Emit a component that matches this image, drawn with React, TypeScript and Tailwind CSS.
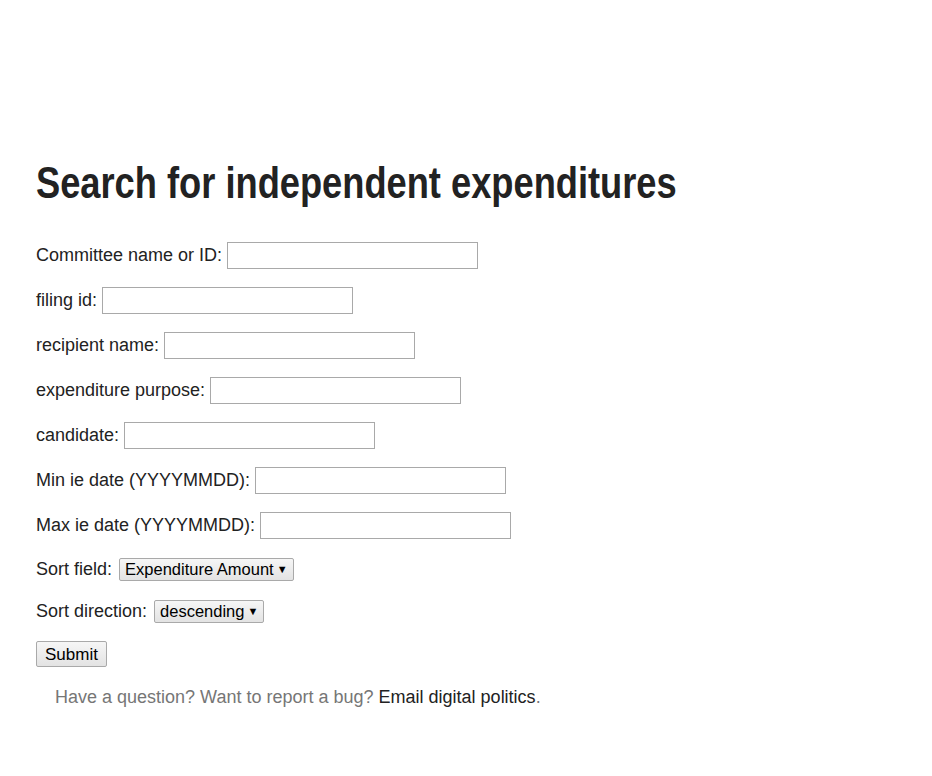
import React from 'react';

const fields = [
  'Committee name or ID:',
  'filing id:',
  'recipient name:',
  'expenditure purpose:',
  'candidate:',
  'Min ie date (YYYYMMDD):',
  'Max ie date (YYYYMMDD):',
];

function SelectBox({ label }: { label: string }) {
  return (
    <span className="inline-flex items-center h-[23px] px-[5px] border border-[#a9a9a9] rounded-[2px] bg-gradient-to-b from-[#f6f6f6] to-[#e3e3e3] text-[16.5px] text-black leading-none">
      {label}
      <span className="ml-[3px] text-[11px]">▼</span>
    </span>
  );
}

export default function App() {
  return (
    <div className="min-h-screen bg-white text-[#222] font-['Liberation_Sans',Arial,sans-serif]">
      <div className="pl-[36px] pt-[156px]">
        <h1 className="origin-left scale-x-[0.824] whitespace-nowrap font-['Liberation_Sans',Arial,sans-serif] font-bold text-[44px] leading-[54px] text-[#222]">
          Search for independent expenditures
        </h1>

        <form className="mt-[32px] flex flex-col gap-[18px] text-[18px]">
          {fields.map((f) => (
            <div key={f} className="flex items-center h-[27px]">
              <label className="mr-[5px]">{f}</label>
              <input
                type="text"
                className="w-[251px] h-[27px] border border-[#a9a9a9] bg-white outline-none"
              />
            </div>
          ))}

          <div className="flex items-center h-[24px]">
            <label className="mr-[7px]">Sort field:</label>
            <SelectBox label="Expenditure Amount" />
          </div>

          <div className="flex items-center h-[24px]">
            <label className="mr-[7px]">Sort direction:</label>
            <SelectBox label="descending" />
          </div>

          <div className="flex items-center h-[26px]">
            <button
              type="button"
              className="h-[26px] px-[8px] border border-[#a9a9a9] rounded-[2px] bg-gradient-to-b from-[#f6f6f6] to-[#e3e3e3] text-[17px] text-black leading-none"
            >
              Submit
            </button>
          </div>
        </form>

        <p className="mt-[17px] pl-[19px] text-[18px] text-[#767676]">
          Have a question? Want to report a bug?{' '}
          <a className="text-[#222]">Email digital politics</a>.
        </p>
      </div>
    </div>
  );
}
